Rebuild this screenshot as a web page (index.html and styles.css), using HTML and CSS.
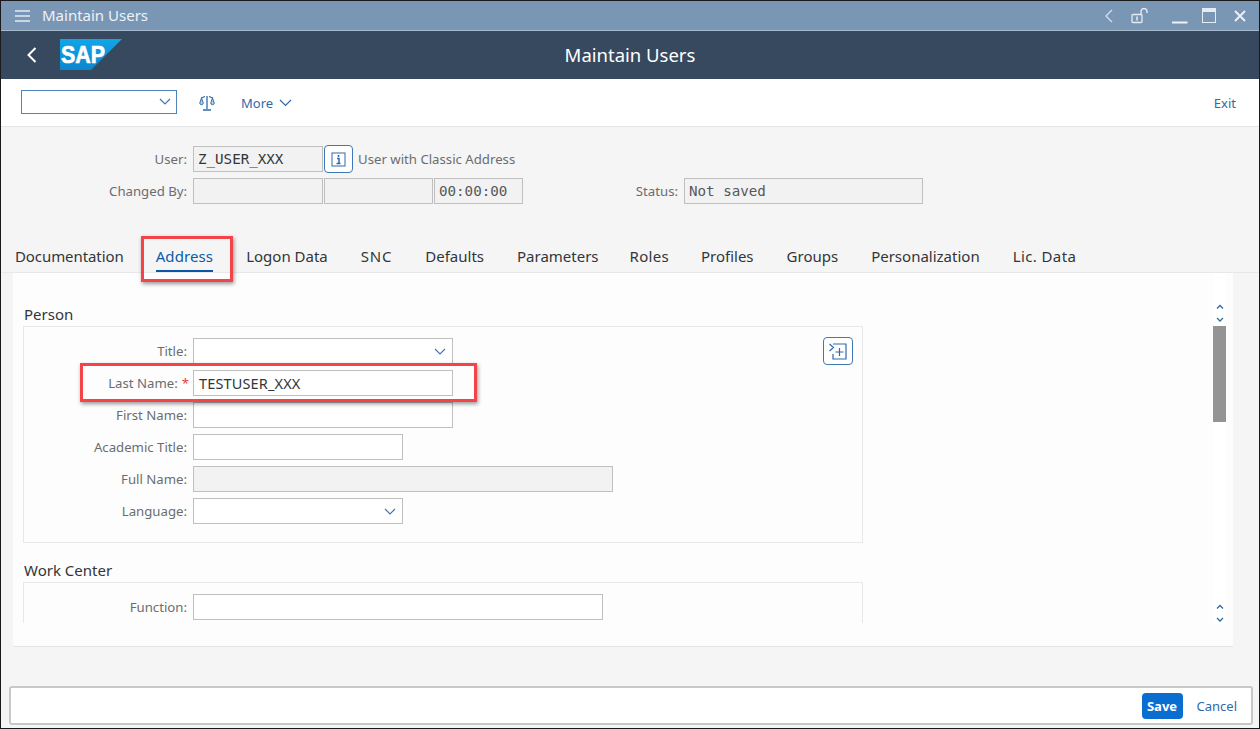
FILE: index.html
```html
<!DOCTYPE html>
<html lang="en">
	<head>
		<meta charset="utf-8" />
		<title>Maintain Users</title>
		<link rel="stylesheet" href="styles.css">
	</head>
	<body>
		<div class="window">
			<!-- Title bar -->
			<div class="titlebar">
				<svg class="ico-menu" width="18" height="12" viewBox="0 0 18 12"><path d="M1 1h15M1 6h15M1 11h15" stroke="#e4ebf3" stroke-width="1.400" fill="none"/></svg>
				<span class="titlebar-text">Maintain Users</span>
				<div class="spacer"></div>
				<svg class="ico-back" width="10" height="14" viewBox="0 0 10 14"><path d="M8 1L2 7l6 6" stroke="#d5e0ec" stroke-width="1.300" fill="none"/></svg>
				<svg class="ico-lock" width="18" height="16" viewBox="0 0 18 16"><path d="M10 6V3.500a3 3 0 0 1 6 0V5" stroke="#e4ebf3" stroke-width="1.400" fill="none"/><rect x="1" y="6.500" width="10" height="8" rx="1" stroke="#e4ebf3" stroke-width="1.300" fill="none"/><path d="M6 8.500v4" stroke="#e4ebf3" stroke-width="1.500"/></svg>
				<svg class="ico-min" width="16" height="16" viewBox="0 0 16 16"><path d="M0 14.500h15.500" stroke="#eef2f7" stroke-width="2"/></svg>
				<svg class="ico-max" width="14" height="15" viewBox="0 0 14 15"><rect x=".5" y=".5" width="13" height="14" stroke="#e4ebf3" fill="none"/><path d="M0 2.500h14" stroke="#e4ebf3" stroke-width="3"/></svg>
				<svg class="ico-close" width="12" height="12" viewBox="0 0 12 12"><path d="M1 1l10 10M11 1L1 11" stroke="#eef2f7" stroke-width="1.800" fill="none"/></svg>
			</div>

			<!-- Shell bar -->
			<div class="shell">
				<svg class="ico-nav" width="10" height="16" viewBox="0 0 10 16"><path d="M8.500 1L1.500 8l7 7" stroke="#fff" stroke-width="2" fill="none"/></svg>
				<svg class="logo" width="62" height="31" viewBox="0 0 62 31">
					<defs><linearGradient id="sapblue" x1="0" y1="0" x2="0" y2="1"><stop offset="0" stop-color="#12a5e8"/><stop offset="1" stop-color="#0a86cf"/></linearGradient></defs>
					<path d="M0 0h62L31 31H0z" fill="url(#sapblue)"/>
					<text x="1" y="24" class="logo-text" textLength="44" lengthAdjust="spacingAndGlyphs">SAP</text>
				</svg>
				<div class="shell-title">Maintain Users</div>
			</div>

			<!-- Toolbar -->
			<div class="toolbar">
				<div class="tool-select">
					<svg class="chev" width="12" height="7" viewBox="0 0 12 7"><path d="M1 1l5 5 5-5" stroke="#3f78b5" stroke-width="1.200" fill="none"/></svg>
				</div>
				<svg class="ico-scale" width="16" height="16" viewBox="0 0 16 16"><path d="M8 1v13M4 15h8M2 3l4-1.500M14 3l-4-1.500" stroke="#2f6aa8" stroke-width="1.300" fill="none"/><path d="M0.800 8l1.700-5 1.700 5a1.700 1.700 0 0 1-3.400 0zM11.800 8l1.700-5 1.700 5a1.700 1.700 0 0 1-3.400 0z" stroke="#2f6aa8" fill="#2f6aa8" fill-opacity=".3"/></svg>
				<span class="tool-link tool-more">More</span>
				<svg class="chev-more" width="13" height="8" viewBox="0 0 13 8"><path d="M1 1l5.500 5.500L12 1" stroke="#2f6aa8" stroke-width="1.200" fill="none"/></svg>
				<div class="spacer"></div>
				<span class="tool-link">Exit</span>
			</div>

			<div class="main">
				<!-- User header -->
				<div class="head">
					<div class="row">
						<label class="lbl">User:</label>
						<div class="inp ro w130 mono mono-dark">Z_USER_XXX</div>
						<button class="icon-btn info"><svg width="15" height="15" viewBox="0 0 15 15"><rect x="1" y="1" width="13" height="13" stroke="#2f6aa8" fill="none"/><path d="M6 6.500h2v5M5.500 11.500h4M7.500 3v2" stroke="#2f6aa8" stroke-width="1.500" fill="none"/></svg></button>
						<span class="note">User with Classic Address</span>
					</div>
					<div class="row">
						<label class="lbl">Changed By:</label>
						<div class="inp ro w130"></div>
						<div class="inp ro w109"></div>
						<div class="inp ro w89 mono">00:00:00</div>
						<label class="lbl lbl-status">Status:</label>
						<div class="inp ro w239 mono">Not saved</div>
					</div>
				</div>

				<!-- Tabs -->
				<div class="tabs">
					<span class="tab tab-first">Documentation</span>
					<span class="tab active">Address<i class="hl hl-tab"></i></span>
					<span class="tab">Logon Data</span>
					<span class="tab tab-caps">SNC</span>
					<span class="tab">Defaults</span>
					<span class="tab">Parameters</span>
					<span class="tab tab-roles">Roles</span>
					<span class="tab">Profiles</span>
					<span class="tab">Groups</span>
					<span class="tab">Personalization</span>
					<span class="tab tab-loose">Lic. Data</span>
				</div>

				<!-- Tab content -->
				<div class="panel">
					<div class="forms">
						<h3>Person</h3>
						<div class="box box-person">
							<div class="row">
								<label class="lbl">Title:</label>
								<div class="inp w260"><svg class="chev" width="12" height="7" viewBox="0 0 12 7"><path d="M1 1l5 5 5-5" stroke="#3f78b5" stroke-width="1.200" fill="none"/></svg></div>
								<button class="icon-btn add"><svg width="20" height="19" viewBox="0 0 20 19"><path d="M1.500 2l4 3.500-4 3.500M5 2h13v15H5v-5M11.500 6v8M7.500 10h8" stroke="#2f6aa8" stroke-width="1.200" fill="none"/></svg></button>
							</div>
							<div class="row">
								<i class="hl hl-row"></i>
								<label class="lbl">Last Name:<b class="req">*</b></label>
								<div class="inp w260 val">TESTUSER_XXX</div>
							</div>
							<div class="row">
								<label class="lbl">First Name:</label>
								<div class="inp w260"></div>
							</div>
							<div class="row">
								<label class="lbl">Academic Title:</label>
								<div class="inp w210"></div>
							</div>
							<div class="row">
								<label class="lbl">Full Name:</label>
								<div class="inp ro w420"></div>
							</div>
							<div class="row">
								<label class="lbl">Language:</label>
								<div class="inp w210"><svg class="chev" width="12" height="7" viewBox="0 0 12 7"><path d="M1 1l5 5 5-5" stroke="#3f78b5" stroke-width="1.200" fill="none"/></svg></div>
							</div>
						</div>
						<h3 class="h-work">Work Center</h3>
						<div class="box box-work">
							<div class="row">
								<label class="lbl">Function:</label>
								<div class="inp w410"></div>
							</div>
						</div>
					</div>
					<div class="scrollbar">
						<svg class="sb-arrows" width="10" height="20" viewBox="0 0 10 20"><path d="M2 4.500L5 1.500l3 3M2 14l3 3 3-3" stroke="#2f6aa8" stroke-width="1.300" fill="none"/></svg>
						<div class="thumb"></div>
						<div class="spacer"></div>
						<svg class="sb-arrows" width="10" height="20" viewBox="0 0 10 20"><path d="M2 4.500L5 1.500l3 3M2 14l3 3 3-3" stroke="#2f6aa8" stroke-width="1.300" fill="none"/></svg>
					</div>
				</div>

				<!-- Footer -->
				<div class="footer">
					<button class="btn-save">Save</button>
					<span class="tool-link">Cancel</span>
				</div>
			</div>
		</div>
	</body>
</html>
```

FILE: styles.css
```css
* {
	box-sizing: border-box;
}
html, body {
	height: 100%;
	margin: 0;
}
body {
	color: #32363a;
	font-family: "Noto Sans", "Open Sans", sans-serif;
	font-size: 13px;
}
.window {
	background-color: #f5f5f5;
	border: 1px solid #1a1a1a;
	display: flex;
	flex-direction: column;
	height: 729px;
	overflow: hidden;
	width: 1260px;
}
.spacer {
	flex: 1;
}

/* title bar */
.titlebar {
	align-items: center;
	background-color: #7a96b5;
	border-bottom: 1px solid #a9bbcf;
	color: #eef2f7;
	display: flex;
	flex: none;
	font-size: 15px;
	height: 30px;
	padding: 0 0 0 13px;
}
.titlebar-text {
	margin-left: 10px;
	margin-top: -2px;
}
.ico-back {
	margin-right: 17px;
}
.ico-lock {
	margin-right: 23px;
}
.ico-min {
	margin-right: 14px;
}
.ico-max {
	margin-right: 18px;
}
.ico-close {
	margin-right: 13px;
}

/* shell bar */
.shell {
	align-items: center;
	background-color: #36495e;
	display: flex;
	flex: none;
	height: 48px;
	padding-left: 26px;
	position: relative;
}
.logo {
	margin-left: 23px;
	margin-top: -1px;
}
.logo-text {
	fill: #fff;
	font-family: "Liberation Sans", sans-serif;
	font-size: 24px;
	font-weight: bold;
	stroke: #fff;
	stroke-width: .7px;
}
.shell-title {
	color: #fff;
	font-size: 18.500px;
	left: 0;
	pointer-events: none;
	position: absolute;
	right: 0;
	text-align: center;
	top: 11px;
}

/* toolbar */
.toolbar {
	align-items: center;
	background-color: #fff;
	border-bottom: 1px solid #e5e5e5;
	display: flex;
	flex: none;
	height: 48px;
	padding: 0 23px 0 20px;
}
.tool-select {
	align-items: center;
	border: 1px solid #4f83bb;
	display: flex;
	height: 24px;
	justify-content: flex-end;
	margin-top: -2px;
	padding-right: 4px;
	width: 156px;
}
.ico-scale {
	margin-left: 22px;
}
.tool-link {
	color: #2f6aa8;
}
.tool-more {
	margin-left: 26px;
}
.chev-more {
	margin-left: 6px;
}

/* form bits */
.main {
	display: flex;
	flex: 1;
	flex-direction: column;
	min-height: 0;
}
.head {
	display: flex;
	flex-direction: column;
	gap: 6px;
	height: 110px;
	padding-top: 19px;
}
.row {
	align-items: center;
	display: flex;
	height: 26px;
	position: relative;
}
.lbl {
	color: #6a6d70;
	flex: none;
	font-size: 13.200px;
	margin-right: 6px;
	text-align: right;
	width: 186px;
}
.lbl-status {
	margin-left: 33px;
	width: 122px;
}
.inp {
	align-items: center;
	background-color: #fff;
	border: 1px solid #bfbfbf;
	display: flex;
	flex: none;
	height: 26px;
	justify-content: flex-end;
	padding: 0 5px;
}
.ro {
	background-color: #f2f2f2;
	justify-content: flex-start;
}
.row .ro + .ro {
	margin-left: 1px;
}
.val {
	font-size: 14.500px;
	justify-content: flex-start;
	letter-spacing: .15px;
}
.mono {
	color: #55585b;
	font-family: "DejaVu Sans Mono", "Liberation Mono", monospace;
	font-size: 14.200px;
	justify-content: flex-start;
	padding-left: 4px;
}
.mono-dark {
	color: #32363a;
}
.w89 { width: 89px; }
.w109 { width: 109px; }
.w130 { width: 130px; }
.w210 { width: 210px; }
.w239 { width: 239px; }
.w260 { width: 260px; }
.w410 { width: 410px; }
.w420 { width: 420px; }
.chev {
	margin-right: 1px;
}
.icon-btn {
	align-items: center;
	background-color: #fff;
	border: 1px solid #3f78b5;
	border-radius: 4px;
	display: flex;
	justify-content: center;
	padding: 0;
}
.info {
	height: 28px;
	margin-left: 1px;
	width: 29px;
}
.note {
	color: #6a6d70;
	font-size: 13.200px;
	margin-left: 5px;
}
.req {
	color: #e0443e;
	font-weight: normal;
	margin-left: 4px;
	margin-right: -2px;
}

/* tabs */
.tabs {
	align-items: flex-start;
	border-bottom: 1px solid #e8e8e8;
	display: flex;
	flex: none;
	font-size: 15px;
	gap: 33px;
	height: 36px;
	line-height: 20px;
	padding: 9px 0 0 14px;
}
.tab {
	color: #32363a;
	height: 26px;
	position: relative;
}
.tab-first {
	letter-spacing: -.08px;
	margin-right: -1px;
}
.tab-caps {
	letter-spacing: .8px;
}
.tab-roles {
	letter-spacing: .3px;
	margin-left: -2px;
	margin-right: -1px;
}
.tab-loose {
	letter-spacing: .4px;
}
.tab.active {
	border-bottom: 2px solid #0a55a5;
	color: #0a5ba8;
	letter-spacing: .1px;
}

/* red call-outs */
.hl {
	border: 3px solid #f5434a;
	box-shadow: 1px 2px 4px rgba(0, 0, 0, .4);
	pointer-events: none;
	position: absolute;
	z-index: 2;
}
.hl-tab {
	bottom: -12px;
	left: -15px;
	right: -20px;
	top: -10px;
}
.hl-row {
	bottom: -6px;
	left: 56px;
	top: -7px;
	width: 397px;
}

/* panel */
.panel {
	background-color: #fdfdfd;
	border-bottom: 1px solid #e5e5e5;
	display: flex;
	flex: none;
	height: 374px;
	justify-content: space-between;
	margin-left: 12px;
	width: 1220px;
}
.forms {
	height: 350px;
	overflow: hidden;
	padding: 31px 0 0 10px;
	width: 850px;
}
.forms h3 {
	font-size: 15px;
	font-weight: normal;
	line-height: 20px;
	margin: 0 0 2px 1px;
}
.forms h3.h-work {
	margin-top: 17px;
}
.box {
	border: 1px solid #e8e8e8;
	display: flex;
	flex-direction: column;
	gap: 6px;
	padding-top: 11px;
	position: relative;
}
.box-person {
	height: 217px;
}
.box-work {
	height: 60px;
}
.box .lbl {
	width: 163px;
}
.add {
	height: 28px;
	position: absolute;
	right: 9px;
	top: -1px;
	width: 30px;
}
.scrollbar {
	align-items: center;
	background-color: #fff;
	display: flex;
	flex-direction: column;
	height: 351px;
	margin-right: 7px;
	padding-top: 31px;
	width: 13px;
}
.sb-arrows {
	flex: none;
}
.thumb {
	background-color: #949494;
	flex: none;
	height: 96px;
	margin-top: 2px;
	width: 13px;
}

/* footer */
.footer {
	align-items: center;
	background-color: #fff;
	border: 2px solid #c8c8c8;
	border-radius: 3px;
	display: flex;
	flex: none;
	height: 39px;
	justify-content: flex-end;
	margin: 39px 6px 0 8px;
	padding-right: 14px;
}
.btn-save {
	background-color: #0a6ed1;
	border: 0;
	border-radius: 4px;
	color: #fff;
	font-family: inherit;
	font-size: 13px;
	font-weight: 700;
	height: 26px;
	margin-right: 14px;
	padding: 0;
	width: 41px;
}
```
